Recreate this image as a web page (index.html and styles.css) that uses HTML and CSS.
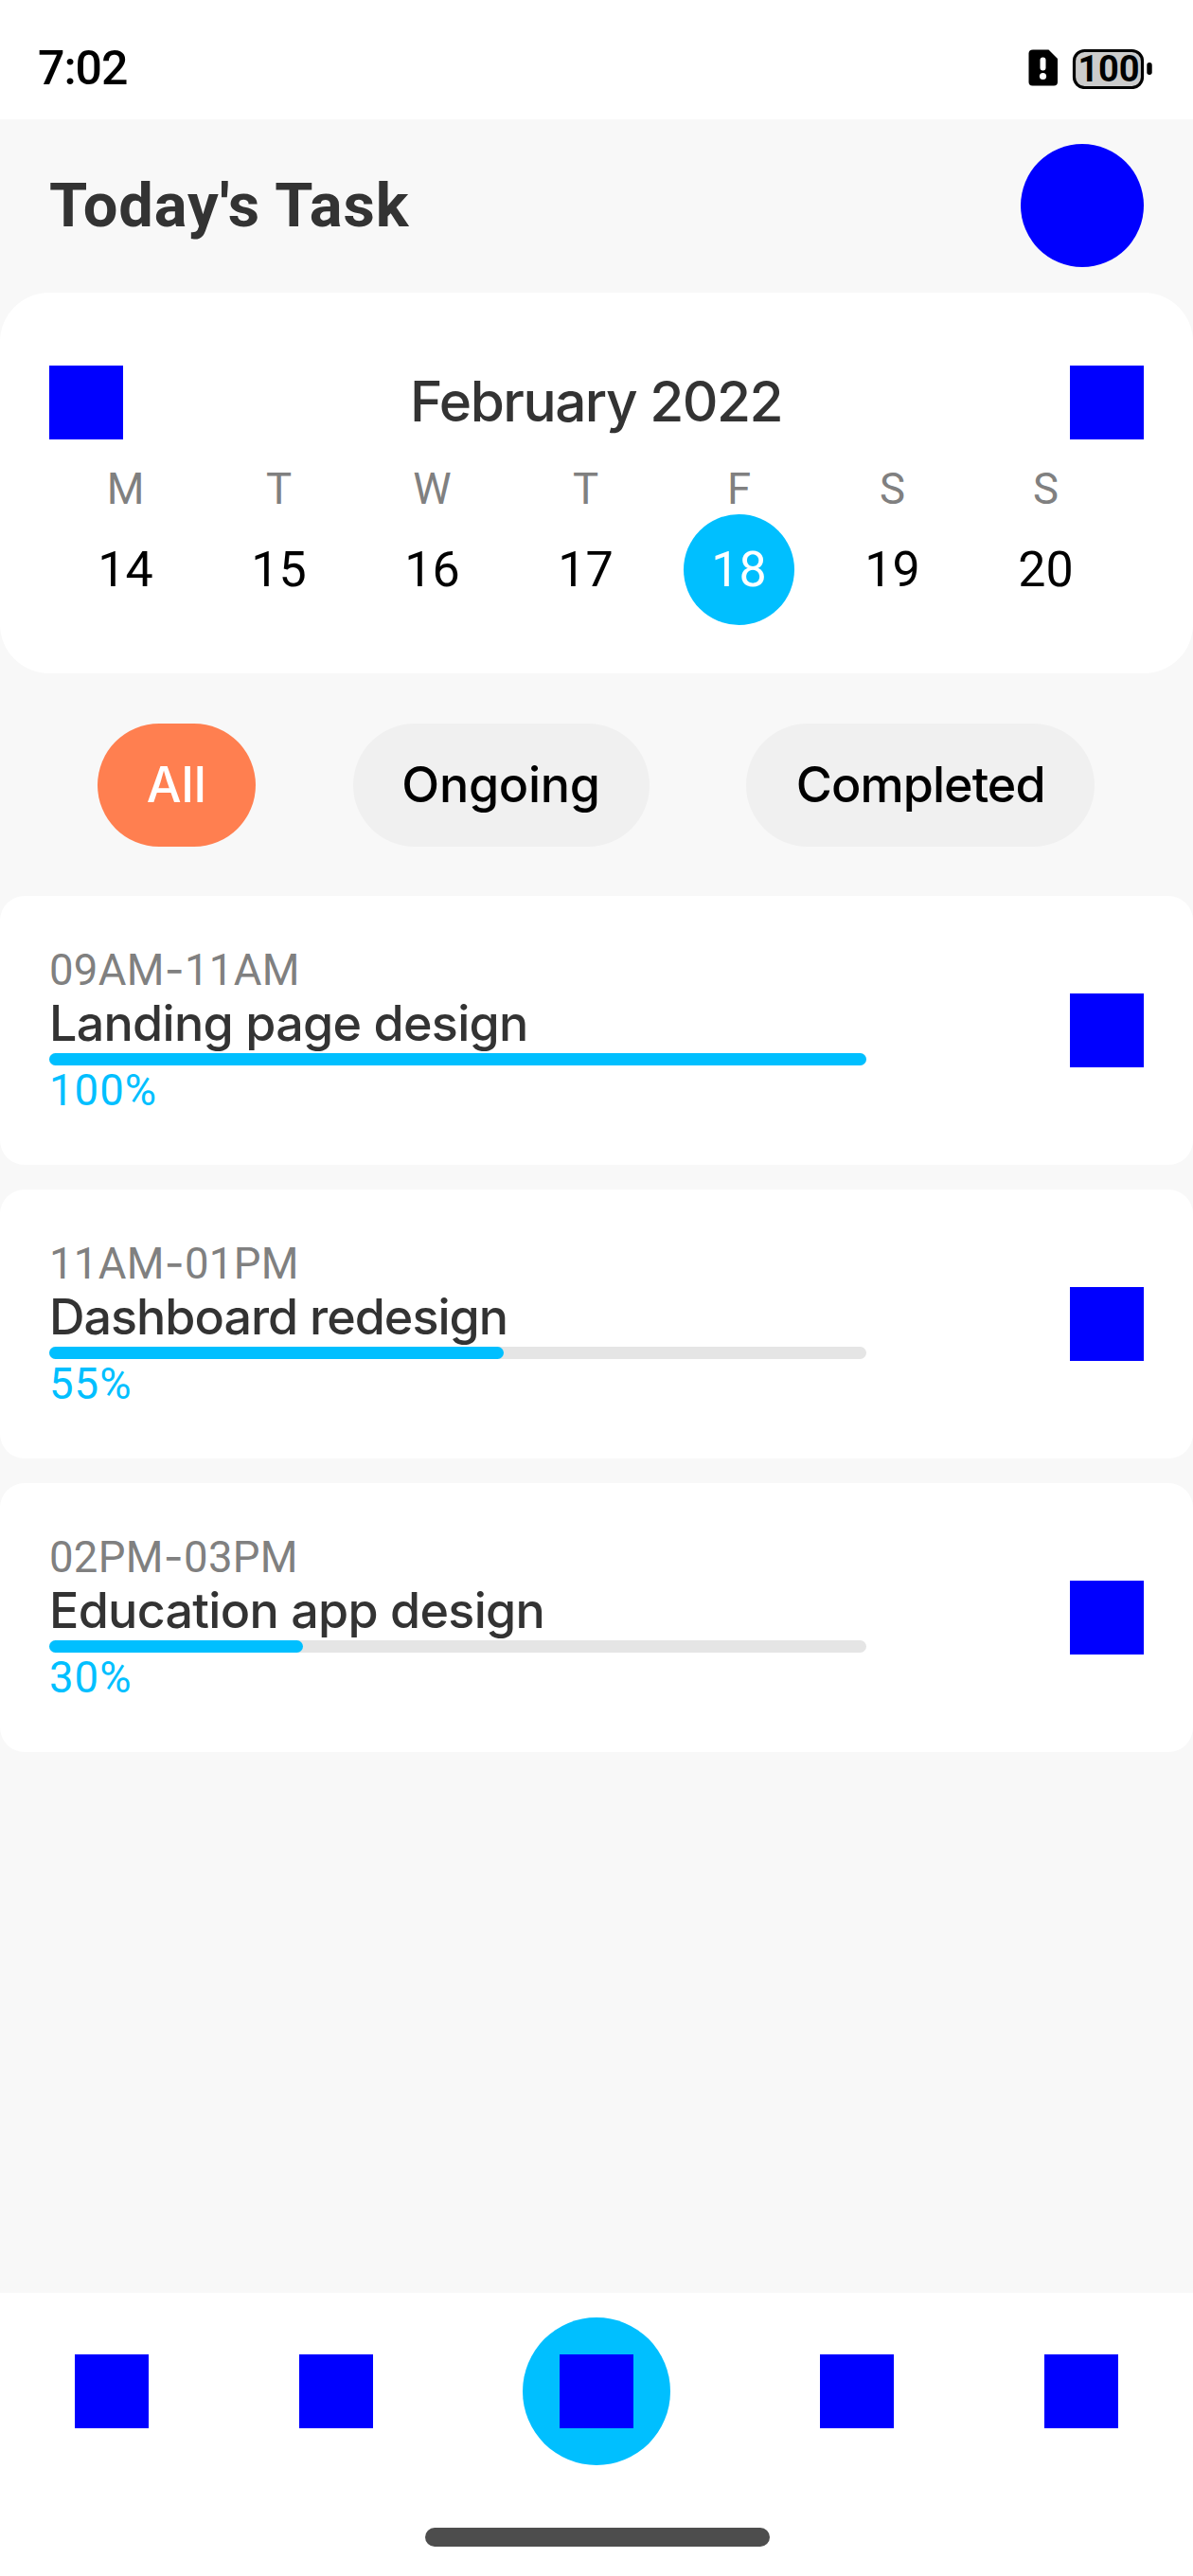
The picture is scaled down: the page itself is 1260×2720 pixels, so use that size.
FILE: index.html
```
<!DOCTYPE html>
<html lang="en">
<head>
<meta charset="utf-8">
<title>Today's Task</title>
<link rel="stylesheet" href="styles.css">
</head>
<body>
<div class="screen">
  <div class="status">
    <span class="clock">7:02</span>
    <svg class="status-icons" width="132" height="44" viewBox="0 0 132 44">
      <path d="M5 2.500H21.500L31 12V36.500Q31 40.500 27 40.500H4.500Q0.500 40.500 0.500 36.500V6.500Q0.500 2.500 5 2.500Z" fill="#000"/>
      <rect x="12.500" y="10.500" width="6" height="14" rx="3" fill="#fff"/>
      <circle cx="15.500" cy="30.500" r="3.600" fill="#fff"/>
      <rect x="48.500" y="3.500" width="72" height="39" rx="11" fill="#ccc" stroke="#000" stroke-width="3.200"/>
      <rect x="125.300" y="16" width="5.400" height="13" rx="2.700" fill="#000"/>
      <text class="battery" x="52.500" y="35.500" textLength="65" lengthAdjust="spacing">100</text>
    </svg>
  </div>

  <header class="header">
    <h1 class="title">Today's Task</h1>
    <div class="avatar"></div>
  </header>

  <section class="calendar">
    <div class="month-row">
      <div class="icon"></div>
      <h2 class="month">February 2022</h2>
      <div class="icon"></div>
    </div>
    <div class="week">
      <div class="day"><span class="weekday">M</span><span class="date">14</span></div>
      <div class="day"><span class="weekday">T</span><span class="date">15</span></div>
      <div class="day"><span class="weekday">W</span><span class="date">16</span></div>
      <div class="day"><span class="weekday">T</span><span class="date">17</span></div>
      <div class="day"><span class="weekday">F</span><span class="date selected">18</span></div>
      <div class="day"><span class="weekday">S</span><span class="date">19</span></div>
      <div class="day"><span class="weekday">S</span><span class="date">20</span></div>
    </div>
  </section>

  <div class="filters">
    <span class="pill all">All</span>
    <span class="pill ongoing">Ongoing</span>
    <span class="pill completed">Completed</span>
  </div>

  <main class="tasks">
    <article class="task">
      <div class="info">
        <span class="time">09AM<span class="dash">-</span>11AM</span>
        <span class="name">Landing page design</span>
        <div class="track"><div class="fill" style="width:862.5px"></div></div>
        <span class="percent">100%</span>
      </div>
      <div class="icon"></div>
    </article>
    <article class="task">
      <div class="info">
        <span class="time">11AM<span class="dash">-</span>01PM</span>
        <span class="name redesign">Dashboard redesign</span>
        <div class="track"><div class="fill" style="width:480px"></div></div>
        <span class="percent">55%</span>
      </div>
      <div class="icon"></div>
    </article>
    <article class="task">
      <div class="info">
        <span class="time">02PM<span class="dash">-</span>03PM</span>
        <span class="name">Education app design</span>
        <div class="track"><div class="fill" style="width:268px"></div></div>
        <span class="percent">30%</span>
      </div>
      <div class="icon"></div>
    </article>
  </main>

  <nav class="nav">
    <div class="tabs">
      <div class="icon"></div>
      <div class="icon"></div>
      <div class="add"><div class="icon"></div></div>
      <div class="icon"></div>
      <div class="icon"></div>
    </div>
    <div class="home-bar"></div>
  </nav>
</div>
</body>
</html>
```
FILE: styles.css
```
* { box-sizing: border-box; }
body { margin: 0; background: #f8f8f8; }
.screen {
  width: 1260px;
  height: 2720px;
  display: flex;
  flex-direction: column;
  font-family: Roboto, "Liberation Sans", sans-serif;
  color: #000;
}
.icon { width: 78px; height: 78px; background: #00f; flex: none; }

.status {
  height: 126px;
  padding: 18px 42px 0 40px;
  background: #fff;
  display: flex;
  align-items: center;
  justify-content: space-between;
}
.clock { font-size: 50px; font-weight: 500; letter-spacing: -1px; }
.status-icons { display: block; }
.battery { font: 700 38px Roboto, sans-serif; }

.header {
  height: 182.500px;
  padding: 0 52px;
  display: flex;
  align-items: center;
  justify-content: space-between;
}
.title {
  margin: 0;
  font-size: 65px;
  font-weight: 700;
  letter-spacing: 0.900px;
  color: #333;
}
.avatar { width: 130px; height: 130px; border-radius: 50%; background: #00f; }

.calendar {
  height: 402.500px;
  padding-top: 77.500px;
  background: #fff;
  border-radius: 52px;
}
.month-row {
  padding: 0 52px;
  display: flex;
  align-items: center;
  justify-content: space-between;
}
.month {
  margin: 0;
  padding: 0 1px 3px 0;
  font: 500 58.500px Inter, sans-serif;
  letter-spacing: -1.500px;
  color: #333;
}
.week {
  padding: 26px 74px 0 51.500px;
  display: grid;
  grid-template-columns: repeat(7, 162px);
}
.day { display: flex; flex-direction: column; align-items: center; }
.weekday { font-size: 45.500px; line-height: 53px; color: #808080; }
.date {
  width: 117px;
  height: 117px;
  border-radius: 50%;
  font-size: 52px;
  line-height: 117px;
  text-align: center;
}
.selected { background: #00bfff; color: #fff; }

.filters {
  padding: 52.500px 1px 52px 0;
  display: flex;
  justify-content: space-evenly;
}
.pill {
  height: 130px;
  border-radius: 65px;
  background: #f0f0f0;
  font: 500 52px/130px Inter, sans-serif;
  text-align: center;
}
.all {
  width: 167px;
  background: #ff7f50;
  color: #fff;
  letter-spacing: 0;
}
.ongoing { width: 313px; letter-spacing: -0.300px; }
.completed { width: 368px; letter-spacing: -0.950px; }

.tasks { flex: 1; display: flex; flex-direction: column; gap: 26px; }
.task {
  height: 284px;
  padding: 52px;
  background: #fff;
  border-radius: 26px;
  display: flex;
  align-items: center;
  justify-content: space-between;
}
.info { width: 862.500px; display: flex; flex-direction: column; }
.time, .percent { font-size: 45.500px; line-height: 53px; }
.time { color: #808080; letter-spacing: 0.300px; }
.dash { font-family: Inter, sans-serif; line-height: 1; }
.name {
  padding-bottom: 1px;
  font: 500 52px/60px Inter, sans-serif;
  letter-spacing: -0.700px;
  color: #333;
  position: relative;
  z-index: 1;
}
.redesign { letter-spacing: -1px; }
.track { height: 13px; border-radius: 6.500px; background: #e5e5e5; }
.fill { height: 13px; border-radius: 6.500px; background: #00bfff; }
.percent { color: #00bfff; letter-spacing: 1px; }

.nav {
  height: 299px;
  padding-top: 26px;
  background: #fff;
  display: flex;
  flex-direction: column;
  align-items: center;
}
.tabs {
  width: 1260px;
  display: flex;
  align-items: center;
  justify-content: space-around;
}
.add {
  width: 156px;
  height: 156px;
  border-radius: 50%;
  background: #00bfff;
  display: grid;
  place-items: center;
}
.home-bar {
  width: 364px;
  height: 20px;
  margin: 65.500px 0 0 2px;
  border-radius: 10px;
  background: #4d4d4d;
}
```
